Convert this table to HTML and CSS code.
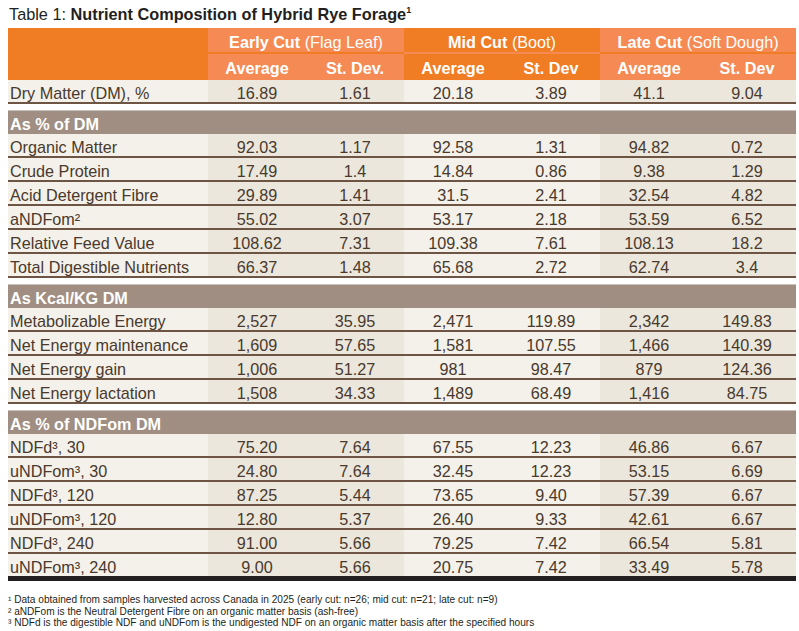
FILE: index.html
```html
<!DOCTYPE html>
<html lang="en">
<head>
<meta charset="utf-8">
<title>Table 1: Nutrient Composition of Hybrid Rye Forage</title>
<link rel="stylesheet" href="styles.css">
</head>
<body>
<div class="page">
  <h1 class="title">Table 1: <strong>Nutrient Composition of Hybrid Rye Forage<span class="sup">1</span></strong></h1>
  <table class="nt">
    <colgroup>
      <col class="c-label">
      <col class="c-num"><col class="c-num">
      <col class="c-num"><col class="c-num">
      <col class="c-num"><col class="c-num">
    </colgroup>
    <thead>
      <tr class="h1">
        <th class="hl" rowspan="2"></th>
        <th class="g-light" colspan="2"><b>Early Cut</b> (Flag Leaf)</th>
        <th class="g-dark" colspan="2"><b>Mid Cut</b> (Boot)</th>
        <th class="g-light" colspan="2"><b>Late Cut</b> (Soft Dough)</th>
      </tr>
      <tr class="h2">
        <th class="s-light">Average</th><th class="s-light">St. Dev.</th>
        <th class="s-dark">Average</th><th class="s-dark">St. Dev</th>
        <th class="s-light">Average</th><th class="s-light">St. Dev</th>
      </tr>
    </thead>
    <tbody>
      <tr class="row"><td>Dry Matter (DM), %</td><td class="a">16.89</td><td class="a">1.61</td><td class="b">20.18</td><td class="b">3.89</td><td class="a">41.1</td><td class="a">9.04</td></tr>
      <tr class="gap"><td colspan="7"></td></tr>
      <tr class="sec"><td colspan="7">As % of DM</td></tr>
      <tr class="row"><td>Organic Matter</td><td class="a">92.03</td><td class="a">1.17</td><td class="b">92.58</td><td class="b">1.31</td><td class="a">94.82</td><td class="a">0.72</td></tr>
      <tr class="row"><td>Crude Protein</td><td class="a">17.49</td><td class="a">1.4</td><td class="b">14.84</td><td class="b">0.86</td><td class="a">9.38</td><td class="a">1.29</td></tr>
      <tr class="row"><td>Acid Detergent Fibre</td><td class="a">29.89</td><td class="a">1.41</td><td class="b">31.5</td><td class="b">2.41</td><td class="a">32.54</td><td class="a">4.82</td></tr>
      <tr class="row"><td>aNDFom²</td><td class="a">55.02</td><td class="a">3.07</td><td class="b">53.17</td><td class="b">2.18</td><td class="a">53.59</td><td class="a">6.52</td></tr>
      <tr class="row"><td>Relative Feed Value</td><td class="a">108.62</td><td class="a">7.31</td><td class="b">109.38</td><td class="b">7.61</td><td class="a">108.13</td><td class="a">18.2</td></tr>
      <tr class="row"><td>Total Digestible Nutrients</td><td class="a">66.37</td><td class="a">1.48</td><td class="b">65.68</td><td class="b">2.72</td><td class="a">62.74</td><td class="a">3.4</td></tr>
      <tr class="gap"><td colspan="7"></td></tr>
      <tr class="sec"><td colspan="7">As Kcal/KG DM</td></tr>
      <tr class="row"><td>Metabolizable Energy</td><td class="a">2,527</td><td class="a">35.95</td><td class="b">2,471</td><td class="b">119.89</td><td class="a">2,342</td><td class="a">149.83</td></tr>
      <tr class="row"><td>Net Energy maintenance</td><td class="a">1,609</td><td class="a">57.65</td><td class="b">1,581</td><td class="b">107.55</td><td class="a">1,466</td><td class="a">140.39</td></tr>
      <tr class="row"><td>Net Energy gain</td><td class="a">1,006</td><td class="a">51.27</td><td class="b">981</td><td class="b">98.47</td><td class="a">879</td><td class="a">124.36</td></tr>
      <tr class="row"><td>Net Energy lactation</td><td class="a">1,508</td><td class="a">34.33</td><td class="b">1,489</td><td class="b">68.49</td><td class="a">1,416</td><td class="a">84.75</td></tr>
      <tr class="gap"><td colspan="7"></td></tr>
      <tr class="sec"><td colspan="7">As % of NDFom DM</td></tr>
      <tr class="row"><td>NDFd³, 30</td><td class="a">75.20</td><td class="a">7.64</td><td class="b">67.55</td><td class="b">12.23</td><td class="a">46.86</td><td class="a">6.67</td></tr>
      <tr class="row"><td>uNDFom³, 30</td><td class="a">24.80</td><td class="a">7.64</td><td class="b">32.45</td><td class="b">12.23</td><td class="a">53.15</td><td class="a">6.69</td></tr>
      <tr class="row"><td>NDFd³, 120</td><td class="a">87.25</td><td class="a">5.44</td><td class="b">73.65</td><td class="b">9.40</td><td class="a">57.39</td><td class="a">6.67</td></tr>
      <tr class="row"><td>uNDFom³, 120</td><td class="a">12.80</td><td class="a">5.37</td><td class="b">26.40</td><td class="b">9.33</td><td class="a">42.61</td><td class="a">6.67</td></tr>
      <tr class="row"><td>NDFd³, 240</td><td class="a">91.00</td><td class="a">5.66</td><td class="b">79.25</td><td class="b">7.42</td><td class="a">66.54</td><td class="a">5.81</td></tr>
      <tr class="row last"><td>uNDFom³, 240</td><td class="a">9.00</td><td class="a">5.66</td><td class="b">20.75</td><td class="b">7.42</td><td class="a">33.49</td><td class="a">5.78</td></tr>
    </tbody>
  </table>
  <div class="notes">
    <p>¹ Data obtained from samples harvested across Canada in 2025 (early cut: n=26; mid cut: n=21; late cut: n=9)</p>
    <p>² aNDFom is the Neutral Detergent Fibre on an organic matter basis (ash-free)</p>
    <p>³ NDFd is the digestible NDF and uNDFom is the undigested NDF on an organic matter basis after the specified hours</p>
  </div>
</div>
</body>
</html>
```

FILE: styles.css
```css
html, body {
  margin: 0;
  padding: 0;
  background: #ffffff;
}

.page {
  padding: 4px 3px 0 8px;
  font-family: "Liberation Sans", Arial, sans-serif;
  color: #4a392d;
}

.title {
  margin: 0 0 4px 1px;
  font-size: 16.3px;
  line-height: 20px;
  font-weight: normal;
  color: #231f20;
}

.title strong {
  font-weight: bold;
}

.title .sup {
  font-size: 9px;
  vertical-align: 7px;
  line-height: 0;
}

.nt {
  width: 788px;
  table-layout: fixed;
  border-collapse: separate;
  border-spacing: 0;
  font-size: 16.2px;
}

.c-label { width: 200px; }
.c-num { width: 98px; }

.nt th {
  padding: 0;
  color: #ffffff;
  font-weight: normal;
  text-align: center;
  white-space: nowrap;
}

.nt th b { font-weight: bold; }

.h1 th {
  height: 20px;
  padding-top: 4px;
  line-height: 20px;
}

.h2 th {
  height: 24px;
  padding-top: 2px;
  line-height: 24px;
  font-weight: bold;
}

.h1 th.hl {
  padding: 0;
}

.hl { background: #f07c24; }

.g-light {
  background: #f58a55;
  border-bottom: 2px solid #f07c24;
}

.g-dark {
  background: #f07c24;
  border-bottom: 2px solid #f58a55;
}

.s-light { background: #f58a55; }
.s-dark { background: #f07c24; }

.row td {
  height: 17px;
  padding: 5px 0 0;
  line-height: 17px;
  border-bottom: 2px solid #6e5543;
  text-align: center;
  background: #f3f1ea;
  white-space: nowrap;
}

.row td:first-child {
  text-align: left;
  padding-left: 2px;
}

.row td.a { background: #ebe7dc; }
.row td.b { background: #f3f1ea; }

.row.last td {
  height: 16px;
  border-bottom: 5px solid #231f20;
}

.gap td {
  height: 6px;
  padding: 0;
  background: #ffffff;
}

.sec td {
  height: 20px;
  padding: 3px 0 0 2px;
  line-height: 20px;
  border-top: 1px solid #cbc2bb;
  background: #a08e82;
  color: #ffffff;
  font-weight: bold;
}

.notes {
  margin-top: 13px;
  color: #231f20;
  font-size: 10.1px;
  line-height: 11.5px;
}

.notes p {
  margin: 0;
  white-space: nowrap;
}
```
